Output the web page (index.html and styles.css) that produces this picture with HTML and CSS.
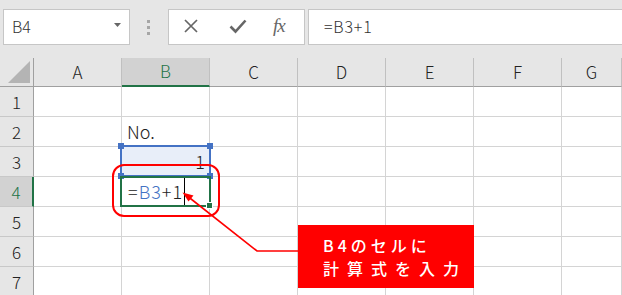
FILE: index.html
```html
<!DOCTYPE html>
<html>
<head>
    <title>B4 formula</title>
    <link rel="stylesheet" href="styles.css">
</head>
<body>
<div class="app">
    <div class="toolbar">
        <div class="namebox">
            <span>B4</span>
            <svg class="caret" width="7" height="4" viewBox="0 0 7 4"><path d="M0 0H7L3.5 4Z" fill="#666"/></svg>
        </div>
        <div class="grip"><i></i><i></i><i></i></div>
        <div class="fnbox">
            <svg width="16" height="16" viewBox="0 0 16 16"><path d="M2 2L14 14M14 2L2 14" stroke="#666" stroke-width="1.7" fill="none"/></svg>
            <svg width="18" height="16" viewBox="0 0 18 16"><path d="M1.5 8.5L6.5 13.5L16.5 2.5" stroke="#666" stroke-width="2.6" fill="none"/></svg>
            <span class="fx">fx</span>
        </div>
        <div class="formula">=B3+1</div>
    </div>

    <div class="grid">
        <div class="corner"><span class="tri"></span></div>
        <div class="colhead">A</div>
        <div class="colhead active">B</div>
        <div class="colhead">C</div>
        <div class="colhead">D</div>
        <div class="colhead">E</div>
        <div class="colhead">F</div>
        <div class="colhead">G</div>

        <div class="rowhead">1</div>
        <div class="cell"></div><div class="cell"></div><div class="cell"></div><div class="cell"></div><div class="cell"></div><div class="cell"></div><div class="cell"></div>

        <div class="rowhead">2</div>
        <div class="cell"></div><div class="cell">No.</div><div class="cell"></div><div class="cell"></div><div class="cell"></div><div class="cell"></div><div class="cell"></div>

        <div class="rowhead">3</div>
        <div class="cell"></div><div class="cell num ref">1</div><div class="cell"></div><div class="cell"></div><div class="cell"></div><div class="cell"></div><div class="cell"></div>

        <div class="rowhead active">4</div>
        <div class="cell"></div><div class="cell edit">=<span class="blue">B3</span>+1<span class="cursor"></span></div><div class="cell"></div><div class="cell"></div><div class="cell"></div><div class="cell"></div><div class="cell"></div>

        <div class="rowhead">5</div>
        <div class="cell"></div><div class="cell"></div><div class="cell"></div><div class="cell"></div><div class="cell"></div><div class="cell"></div><div class="cell"></div>

        <div class="rowhead">6</div>
        <div class="cell"></div><div class="cell"></div><div class="cell"></div><div class="cell"></div><div class="cell"></div><div class="cell"></div><div class="cell"></div>

        <div class="rowhead">7</div>
        <div class="cell"></div><div class="cell"></div><div class="cell"></div><div class="cell"></div><div class="cell"></div><div class="cell"></div><div class="cell"></div>
    </div>

    <!-- selection overlays -->
    <div class="refbox">
        <i class="h tl"></i><i class="h tr"></i><i class="h bl"></i><i class="h br"></i>
    </div>
    <div class="activebox"><i class="fill"></i></div>
    <div class="ring"></div>

    <svg class="arrow" width="622" height="295" viewBox="0 0 622 295">
        <polyline points="300,251 257,251 186,195" stroke="#ff0000" stroke-width="1.6" fill="none"/>
        <path d="M182.5 192.5L193.5 195.5L188.5 201.5Z" fill="#ff0000"/>
    </svg>

    <div class="callout">
        <div class="l1">B4のセルに</div>
        <div class="l2">計算式を入力</div>
    </div>
</div>
</body>
</html>
```

FILE: styles.css
```css
body { margin: 0; overflow: hidden; background: #fff; }
.app {
    position: relative;
    width: 622px;
    height: 295px;
    overflow: hidden;
    font-family: "Noto Sans CJK JP", "Noto Sans", sans-serif;
    font-weight: 300;
}

/* formula bar */
.toolbar {
    display: flex;
    align-items: flex-start;
    height: 58px;
    padding-top: 9px;
    box-sizing: border-box;
    background: #e6e6e6;
}
.namebox {
    display: flex;
    align-items: center;
    justify-content: space-between;
    margin-left: 3px;
    width: 127px;
    height: 36px;
    padding: 0 8px 2px 8px;
    box-sizing: border-box;
    background: #fff;
    border: 1px solid #c6c6c6;
    font-size: 16px;
    color: #333;
}
.caret { margin-top: -3px; }
.grip {
    display: flex;
    flex-direction: column;
    gap: 3px;
    width: 3px;
    margin: 11px 18px 0 17px;
}
.grip i { width: 3px; height: 3px; background: #a6a6a6; }
.fnbox {
    display: flex;
    align-items: center;
    width: 137px;
    height: 36px;
    box-sizing: border-box;
    padding: 0 0 2px 14px;
    background: #fff;
    border: 1px solid #c6c6c6;
}
.fnbox svg:nth-child(2) { margin-left: 30px; }
.fx {
    margin-left: 26px;
    font-family: "Liberation Serif", serif;
    font-style: italic;
    font-size: 19px;
    color: #666;
    letter-spacing: -1px;
}
.formula {
    flex: 1;
    height: 36px;
    margin-left: 3px;
    padding: 4px 0 0 15px;
    box-sizing: border-box;
    background: #fff;
    border: 1px solid #c6c6c6;
    border-right: none;
    font-size: 16px;
    letter-spacing: 0.8px;
    color: #333;
}

/* sheet */
.grid {
    display: grid;
    grid-template-columns: 34px repeat(6, 88px) 1fr;
    grid-template-rows: 29px repeat(7, 30px);
}
.corner, .colhead, .rowhead {
    box-sizing: border-box;
    background: #e6e6e6;
    font-size: 17px;
    color: #222;
    display: flex;
    align-items: center;
    justify-content: center;
}
.corner {
    position: relative;
    border-right: 1px solid #a0a0a0;
    border-bottom: 1px solid #a0a0a0;
}
.tri {
    position: absolute;
    right: 3px;
    bottom: 3px;
    width: 22px;
    height: 22px;
    background: #b4b4b4;
    clip-path: polygon(100% 0, 100% 100%, 0 100%);
}
.colhead {
    border-right: 1px solid #c0c0c0;
    border-bottom: 1px solid #a0a0a0;
    padding-bottom: 2px;
}
.colhead.active {
    background: #d2d2d2;
    border-bottom: 2px solid #217346;
    color: #217346;
}
.rowhead {
    border-right: 1px solid #a0a0a0;
    border-bottom: 1px solid #c8c8c8;
    padding-bottom: 1px;
}
.rowhead.active {
    background: #d2d2d2;
    border-right: 2px solid #217346;
    color: #217346;
}
.cell {
    box-sizing: border-box;
    border-right: 1px solid #d4d4d4;
    border-bottom: 1px solid #d4d4d4;
    font-size: 18px;
    line-height: 27px;
    padding: 1px 0 0 5px;
    color: #222;
    white-space: nowrap;
}
.cell.num { text-align: right; padding-right: 4px; }
.cell.ref { background: #e8eef9; }
.cell.edit { padding-left: 6px; letter-spacing: 1px; }
.blue { color: #4472c4; }
.cursor {
    display: inline-block;
    width: 1px;
    height: 28px;
    margin-left: 1px;
    vertical-align: top;
    background: #000;
}

/* overlays */
.refbox {
    position: absolute;
    left: 120px;
    top: 145px;
    width: 91px;
    height: 32px;
    box-sizing: border-box;
    border: 2px solid #4472c4;
}
.h {
    position: absolute;
    width: 6px;
    height: 6px;
    background: #4472c4;
}
.h.tl { left: -4px; top: -4px; }
.h.tr { right: -4px; top: -4px; }
.h.bl { left: -4px; bottom: -4px; }
.h.br { right: -4px; bottom: -4px; }
.activebox {
    position: absolute;
    left: 120px;
    top: 176px;
    width: 91px;
    height: 31px;
    box-sizing: border-box;
    border: 2px solid #217346;
}
.fill {
    position: absolute;
    right: -4px;
    bottom: -4px;
    width: 5px;
    height: 5px;
    background: #217346;
    border: 1px solid #fff;
}
.ring {
    position: absolute;
    left: 112px;
    top: 164px;
    width: 108px;
    height: 53px;
    box-sizing: border-box;
    border: 2px solid #ff0000;
    border-radius: 12px;
}
.arrow { position: absolute; left: 0; top: 0; }
.callout {
    position: absolute;
    left: 298px;
    top: 225px;
    width: 176px;
    height: 63px;
    box-sizing: border-box;
    padding: 9px 0 0 25px;
    background: #ff0000;
    color: #fff;
    font-size: 16px;
    font-weight: 500;
    line-height: 23px;
}
.callout .l1 { letter-spacing: 4px; }
.callout .l2 { letter-spacing: 8px; }
```
